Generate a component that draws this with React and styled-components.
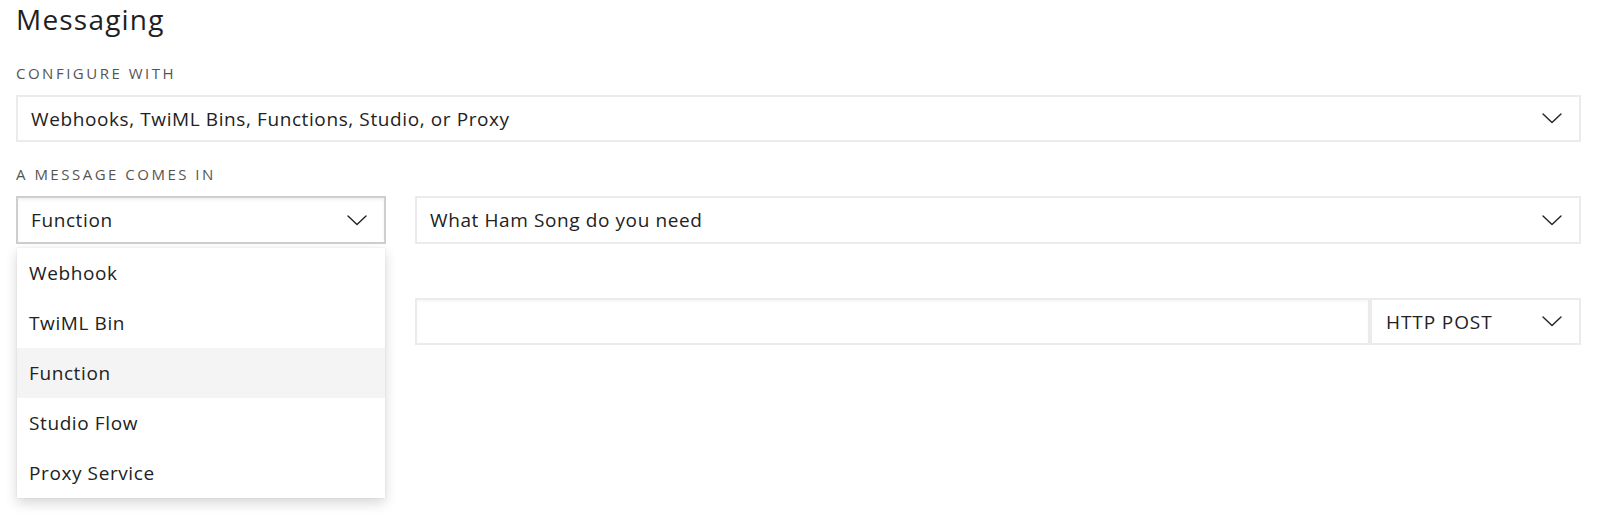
import React from "react";
import styled, { createGlobalStyle } from "styled-components";

const GlobalStyle = createGlobalStyle`
  html, body {
    margin: 0;
    padding: 0;
    background: #fff;
  }
  body {
    font-family: "Open Sans", Lato, sans-serif;
    color: #222;
  }
`;

const Page = styled.div`
  padding: 0 19px 0 16px;
  width: 1600px;
  min-height: 518px;
  box-sizing: border-box;
`;

const Title = styled.h2`
  margin: 0;
  padding-top: 2px;
  font-size: 28px;
  line-height: 35px;
  font-weight: 400;
  letter-spacing: 1.2px;
  color: #1f1f1f;
`;

const Label = styled.div`
  margin: ${({ top }) => top}px 0 13px;
  font-size: 15px;
  line-height: 18px;
  letter-spacing: 2.5px;
  text-transform: uppercase;
  color: #555;
`;

const Select = styled.div`
  display: flex;
  align-items: center;
  justify-content: space-between;
  box-sizing: border-box;
  height: ${({ h }) => h || 47}px;
  padding: 0 17px 0 13px;
  border: 2px solid ${({ focused }) => (focused ? "#cfcfcf" : "#ebebeb")};
  box-shadow: ${({ focused }) =>
    focused ? "inset 0 2px 3px rgba(0, 0, 0, 0.06)" : "none"};
  background: #fff;
  font-size: 19px;
  letter-spacing: 0.6px;
  color: #222;
`;

const Grid = styled.div`
  display: grid;
  grid-template-columns: 370px 1fr;
  column-gap: 29px;
  row-gap: 54px;
`;

const Cell = styled.div`
  position: relative;
`;

const Menu = styled.ul`
  position: absolute;
  top: 52px;
  left: 1px;
  width: 368px;
  margin: 0;
  padding: 0;
  list-style: none;
  background: #fff;
  box-shadow: 0 5px 12px rgba(0, 0, 0, 0.16), 0 0 2px rgba(0, 0, 0, 0.08);
  z-index: 2;
`;

const MenuItem = styled.li`
  height: 50px;
  display: flex;
  align-items: center;
  padding-left: 12px;
  font-size: 19px;
  letter-spacing: 0.6px;
  color: #222;
  background: ${({ active }) => (active ? "#f4f4f4" : "#fff")};
`;

const UrlGroup = styled.div`
  display: flex;
  height: 47px;
`;

const UrlInput = styled.div`
  flex: 1;
  box-sizing: border-box;
  border: 2px solid #ebebeb;
  box-shadow: inset 0 2px 3px rgba(0, 0, 0, 0.03);
`;

const MethodSelect = styled(Select)`
  width: 212px;
  flex: none;
  border-left-width: 3px;
  margin-left: -1px;
  letter-spacing: 0.9px;
  padding-left: 14px;
`;

const Chevron = () => (
  <svg width="20" height="11" viewBox="0 0 20 11" fill="none">
    <polyline
      points="1,1 10,9.5 19,1"
      stroke="#222"
      strokeWidth="1.4"
      strokeLinecap="round"
      strokeLinejoin="round"
    />
  </svg>
);

const options = [
  "Webhook",
  "TwiML Bin",
  "Function",
  "Studio Flow",
  "Proxy Service",
];

export default function App() {
  return (
    <Page>
      <GlobalStyle />
      <Title>Messaging</Title>
      <Label top={27}>Configure with</Label>
      <Select>
        <span>Webhooks, TwiML Bins, Functions, Studio, or Proxy</span>
        <Chevron />
      </Select>
      <Label top={23}>A message comes in</Label>
      <Grid>
        <Cell>
          <Select focused h={48}>
            <span>Function</span>
            <Chevron />
          </Select>
          <Menu>
            {options.map((o) => (
              <MenuItem key={o} active={o === "Function"}>
                {o}
              </MenuItem>
            ))}
          </Menu>
        </Cell>
        <Select h={48}>
          <span>What Ham Song do you need</span>
          <Chevron />
        </Select>
        <div />
        <UrlGroup>
          <UrlInput />
          <MethodSelect>
            <span>HTTP POST</span>
            <Chevron />
          </MethodSelect>
        </UrlGroup>
      </Grid>
    </Page>
  );
}
